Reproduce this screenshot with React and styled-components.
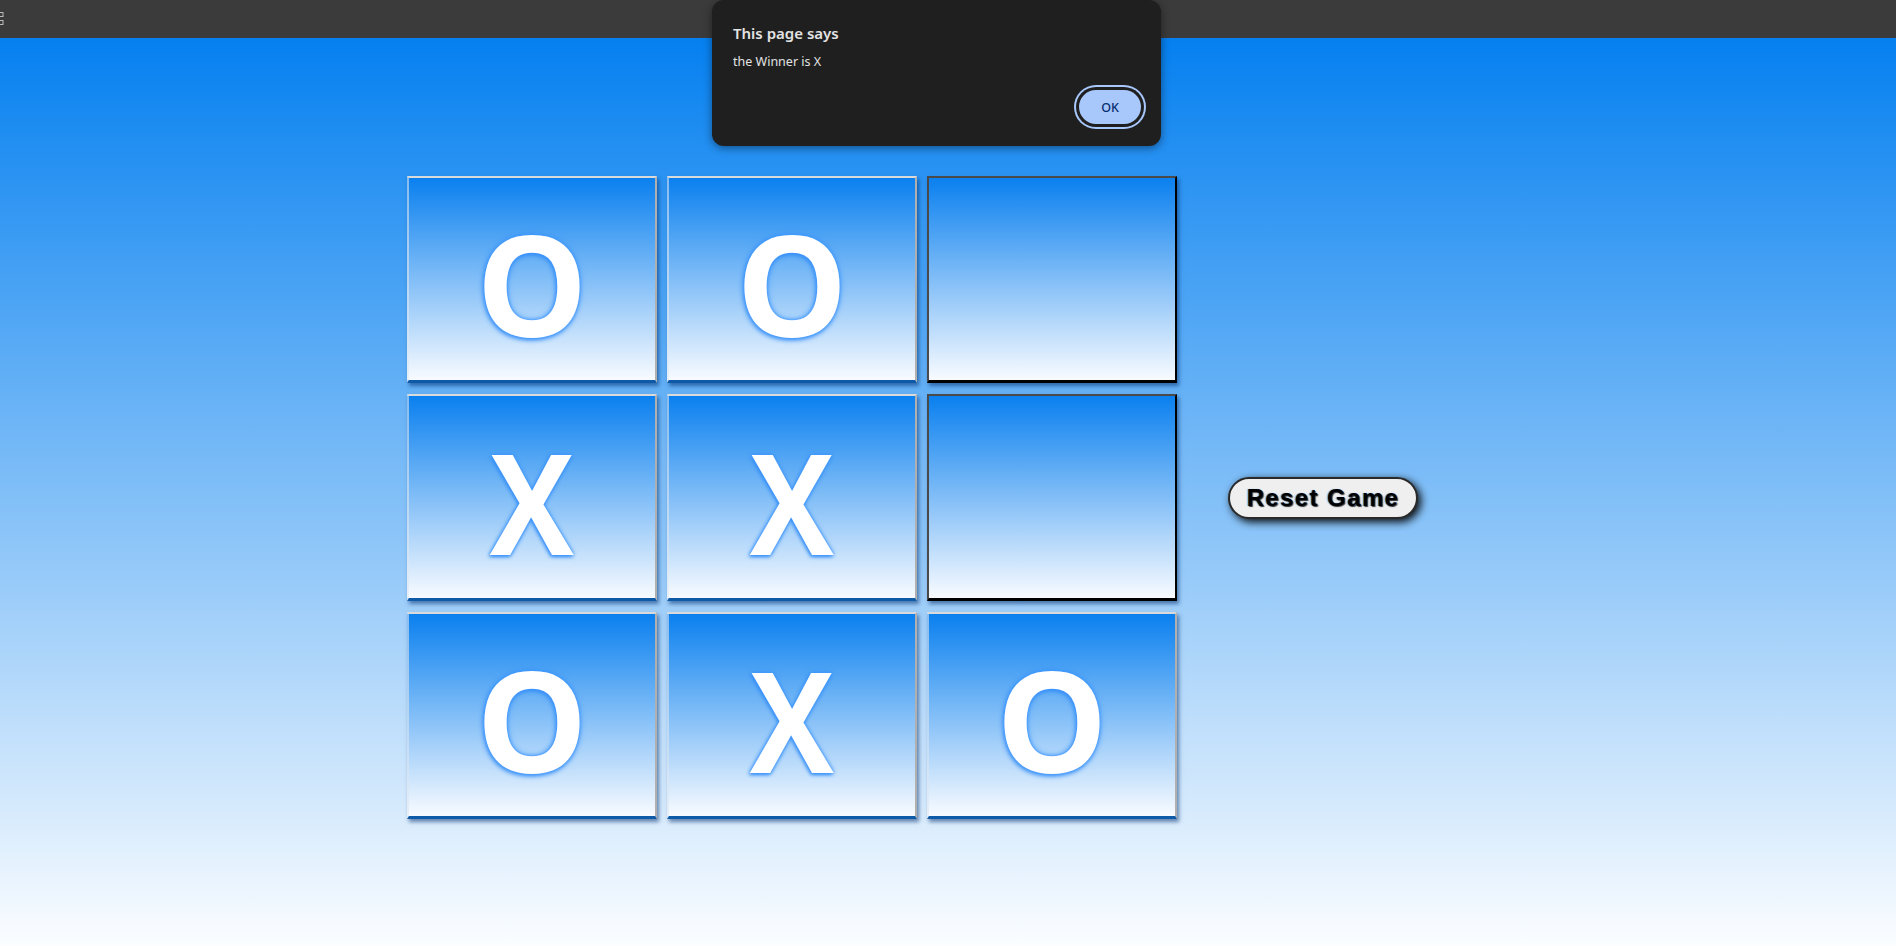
import React from "react";
import styled, { createGlobalStyle } from "styled-components";

const Global = createGlobalStyle`
  html, body { margin: 0; padding: 0; }
  body { font-family: "Liberation Sans", Arial, sans-serif; overflow: hidden; }
`;

const Page = styled.div`
  position: relative;
  width: 1896px;
  height: 946px;
  display: flex;
  flex-direction: column;
`;

const TopBar = styled.div`
  height: 38px;
  flex: none;
  background: #3b3b3b;
  display: flex;
  align-items: center;
`;

const Main = styled.main`
  flex: 1;
  background: linear-gradient(180deg, #0580f0 0%, #fbfdff 100%);
  display: flex;
  align-items: flex-start;
  padding: 138px 0 0 407px;
`;

const Stage = styled.div`
  display: flex;
  align-items: center;
  gap: 51px;
`;

const Board = styled.div`
  display: grid;
  grid-template-columns: repeat(3, 250px);
  grid-auto-rows: 207px;
  column-gap: 10px;
  row-gap: 11px;
`;

const Cell = styled.button`
  box-sizing: border-box;
  margin: 0;
  padding: 8px 0 0;
  cursor: pointer;
  background: linear-gradient(180deg, #0a80ef 0%, #f8fbff 100%);
  border-style: solid;
  border-width: 2px 2px 3px 2px;
  border-color: ${(p) =>
    p.$empty
      ? "#4a4a4a #000 #000 #4a4a4a"
      : "#dadada #b0b0b0 #0c5aa8 rgba(220,230,240,0.6)"};
  box-shadow: 2px 3px 4px rgba(0, 45, 110, 0.55);
  display: flex;
  align-items: center;
  justify-content: center;
`;

const Mark = styled.span`
  display: inline-block;
  font-family: "Open Sans", "Liberation Sans", sans-serif;
  font-weight: 700;
  font-size: 140px;
  line-height: 1;
  color: #ffffff;
  transform: scaleX(${(p) => (p.$letter === "X" ? 0.9 : 1)});
  text-shadow: 0 0 6px rgba(60, 150, 255, 1), 0 0 3px rgba(60, 150, 255, 0.9),
    -1px 2px 4px rgba(40, 130, 240, 0.8);
`;

const ResetButton = styled.button`
  box-sizing: border-box;
  width: 190px;
  height: 42px;
  border-radius: 21px;
  background: #efefef;
  border: 2px solid #2a2a2a;
  box-shadow: 3px 3px 8px rgba(0, 0, 0, 0.95);
  font-family: "Liberation Sans", Arial, sans-serif;
  font-weight: 700;
  font-size: 24px;
  letter-spacing: 1.4px;
  color: #000;
  text-shadow: 1px 1px 1px rgba(0, 0, 0, 0.8), -1px 0 1px rgba(0, 110, 255, 0.5);
  cursor: pointer;
  padding: 0;
`;

const Dialog = styled.div`
  position: absolute;
  top: 0;
  left: 712px;
  width: 449px;
  height: 146px;
  box-sizing: border-box;
  background: #1f1f1f;
  border-radius: 12px;
  box-shadow: 0 2px 8px rgba(0, 0, 0, 0.45);
  padding: 23px 16px 0 21px;
  display: flex;
  flex-direction: column;
  font-family: "Noto Sans", "Open Sans", sans-serif;
  color: #e3e3e3;
`;

const DialogTitle = styled.div`
  font-size: 15px;
  font-weight: 600;
  line-height: 20px;
`;

const DialogMessage = styled.div`
  font-size: 12.5px;
  line-height: 18px;
  margin-top: 10px;
`;

const DialogActions = styled.div`
  display: flex;
  justify-content: flex-end;
  margin-top: 19px;
`;

const OkButton = styled.button`
  width: 62px;
  height: 34px;
  border: none;
  border-radius: 17px;
  background: #a8c7fa;
  color: #062e6f;
  font-family: "Noto Sans", "Open Sans", sans-serif;
  font-size: 12.5px;
  font-weight: 500;
  box-shadow: 0 0 0 3px #1f1f1f, 0 0 0 5px #a8c7fa;
  margin-right: 4px;
  padding: 0;
`;

const board = ["O", "O", "", "X", "X", "", "O", "X", "O"];

export default function App() {
  return (
    <>
      <Global />
      <Page>
        <TopBar>
          <svg width="6" height="16" viewBox="0 0 6 16">
            <rect x="-2" y="1.5" width="5" height="4" fill="none" stroke="#bbb" strokeWidth="1" />
            <rect x="-2" y="9.5" width="5" height="4" fill="none" stroke="#bbb" strokeWidth="1" />
          </svg>
        </TopBar>
        <Main>
          <Stage>
            <Board>
              {board.map((v, i) => (
                <Cell key={i} $empty={!v}>
                  {v && <Mark $letter={v}>{v}</Mark>}
                </Cell>
              ))}
            </Board>
            <ResetButton>Reset Game</ResetButton>
          </Stage>
        </Main>
        <Dialog>
          <DialogTitle>This page says</DialogTitle>
          <DialogMessage>the Winner is X</DialogMessage>
          <DialogActions>
            <OkButton>OK</OkButton>
          </DialogActions>
        </Dialog>
      </Page>
    </>
  );
}
